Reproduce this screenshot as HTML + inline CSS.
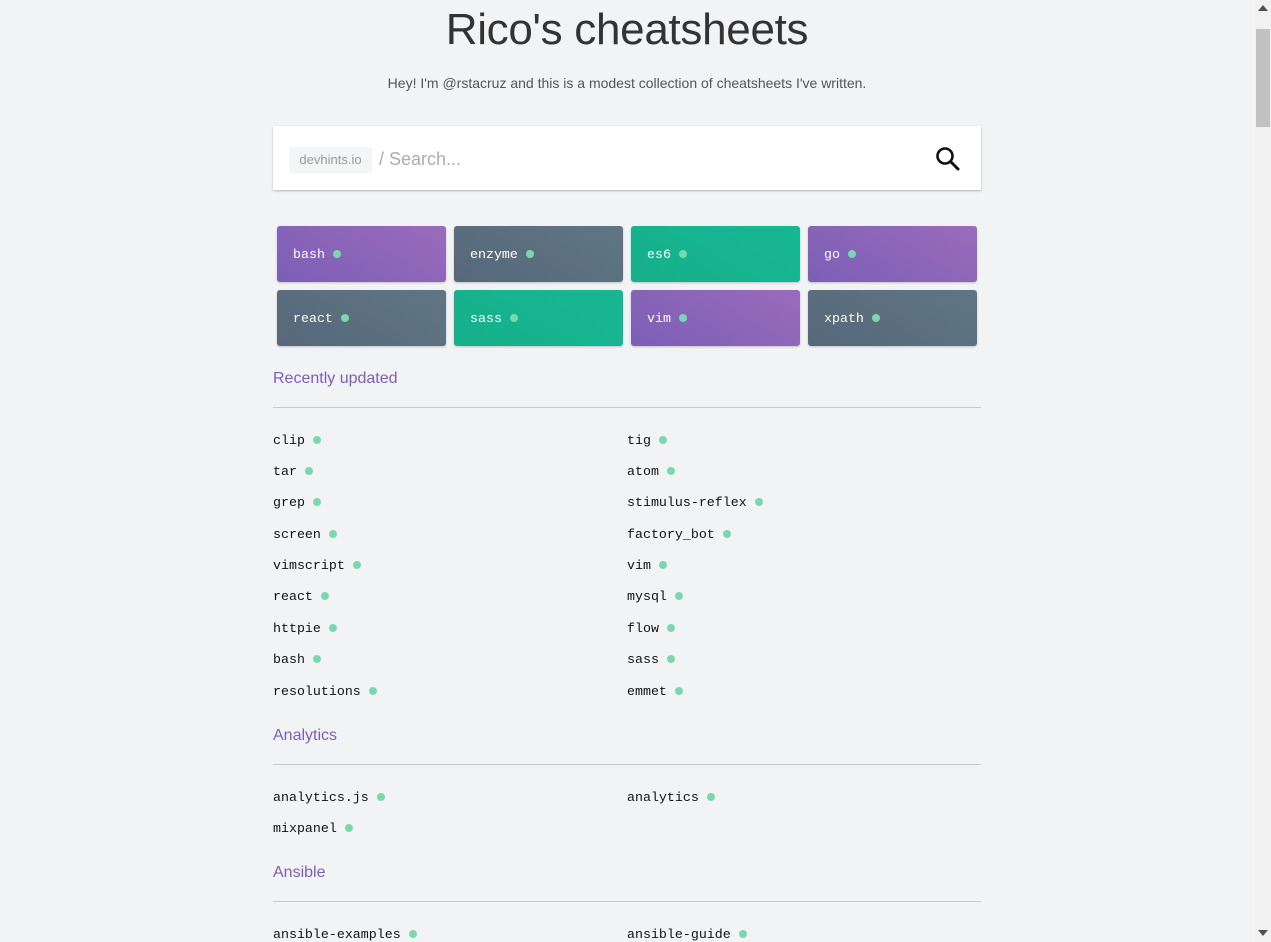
<!DOCTYPE html>
<html><head><style>
*{box-sizing:border-box;margin:0;padding:0}
body{width:1271px;height:942px;overflow:hidden;background:#f2f3f5;font-family:"Liberation Sans",sans-serif;position:relative}
.wrap{position:absolute;left:273px;width:708px;top:0}
h1{position:absolute;left:0;width:708px;top:5px;text-align:center;font-weight:300;font-size:44px;color:#333;letter-spacing:-0.3px}
.sub{position:absolute;top:75px;width:708px;text-align:center;font-size:14px;color:#555}
.search{position:absolute;top:126px;left:0;width:708px;height:64px;background:#fff;box-shadow:0 1px 2px rgba(0,0,0,.25)}
.tag{position:absolute;left:16px;top:21px;height:25px;width:83px;background:#f4f5f7;border-radius:3px;font-size:13px;color:#999;text-align:center;line-height:25px;box-shadow:0 1px 1px rgba(0,0,0,.06)}
.ph{position:absolute;left:106px;top:21px;font-size:18px;color:#aab;line-height:25px}
.icon{position:absolute;left:662px;top:20px}
.card{position:absolute;width:169px;height:56px;border-radius:3px;color:#fff;font-family:"Liberation Mono",monospace;font-size:13.3px;padding-left:16px;line-height:55px;padding-top:1px;box-shadow:0 1px 2px rgba(0,0,0,.2)}
.p{background:linear-gradient(30deg,#7b5fb6,#9b6bbb)}
.g{background:linear-gradient(30deg,#56687a,#607684)}
.t{background:linear-gradient(30deg,#16b08a,#17b794)}
.d{display:inline-block;width:8px;height:8px;border-radius:50%;background:#7bd8ad;margin-left:8px;vertical-align:0px}
.h2{position:absolute;left:0;font-size:16px;color:#7b5fb6}
.hr{position:absolute;left:0;width:708px;height:1px;background:#c8c9cb}
.li{position:absolute;font-family:"Liberation Mono",monospace;font-size:13.3px;color:#111;margin-top:2px}
.sb{position:absolute;left:1255px;top:0;width:16px;height:942px;background:#f1f1f1}
.th{position:absolute;left:1256px;top:29px;width:14px;height:98px;background:#c1c1c1}
</style></head><body>
<div class="wrap">
<h1>Rico's cheatsheets</h1>
<div class="sub">Hey! I'm @rstacruz and this is a modest collection of cheatsheets I've written.</div>
<div class="search"><div class="tag">devhints.io</div><div class="ph">/ Search...</div>
<svg class="icon" width="26" height="26" viewBox="0 0 26 26"><circle cx="10" cy="10" r="7.5" fill="none" stroke="#111" stroke-width="2.6"/><path d="M15.5 15.5L23 23" stroke="#111" stroke-width="3" stroke-linecap="round"/></svg></div>
</div>
<div class="card p" style="left:277px;top:226px">bash<span class="d"></span></div>
<div class="card g" style="left:454px;top:226px">enzyme<span class="d"></span></div>
<div class="card t" style="left:631px;top:226px">es6<span class="d"></span></div>
<div class="card p" style="left:808px;top:226px">go<span class="d"></span></div>
<div class="card g" style="left:277px;top:290px">react<span class="d"></span></div>
<div class="card t" style="left:454px;top:290px">sass<span class="d"></span></div>
<div class="card p" style="left:631px;top:290px">vim<span class="d"></span></div>
<div class="card g" style="left:808px;top:290px">xpath<span class="d"></span></div>
<div class="wrap">
<div class="h2" style="top:370px">Recently updated</div><div class="hr" style="top:407px"></div>
<div class="h2" style="top:727px">Analytics</div><div class="hr" style="top:764px"></div>
<div class="h2" style="top:864px">Ansible</div><div class="hr" style="top:901px"></div>
</div>
<div class="li" style="left:273px;top:431px">clip<span class="d"></span></div>
<div class="li" style="left:273px;top:462px">tar<span class="d"></span></div>
<div class="li" style="left:273px;top:493px">grep<span class="d"></span></div>
<div class="li" style="left:273px;top:525px">screen<span class="d"></span></div>
<div class="li" style="left:273px;top:556px">vimscript<span class="d"></span></div>
<div class="li" style="left:273px;top:587px">react<span class="d"></span></div>
<div class="li" style="left:273px;top:619px">httpie<span class="d"></span></div>
<div class="li" style="left:273px;top:650px">bash<span class="d"></span></div>
<div class="li" style="left:273px;top:682px">resolutions<span class="d"></span></div>
<div class="li" style="left:627px;top:431px">tig<span class="d"></span></div>
<div class="li" style="left:627px;top:462px">atom<span class="d"></span></div>
<div class="li" style="left:627px;top:493px">stimulus-reflex<span class="d"></span></div>
<div class="li" style="left:627px;top:525px">factory_bot<span class="d"></span></div>
<div class="li" style="left:627px;top:556px">vim<span class="d"></span></div>
<div class="li" style="left:627px;top:587px">mysql<span class="d"></span></div>
<div class="li" style="left:627px;top:619px">flow<span class="d"></span></div>
<div class="li" style="left:627px;top:650px">sass<span class="d"></span></div>
<div class="li" style="left:627px;top:682px">emmet<span class="d"></span></div>
<div class="li" style="left:273px;top:788px">analytics.js<span class="d"></span></div>
<div class="li" style="left:273px;top:819px">mixpanel<span class="d"></span></div>
<div class="li" style="left:627px;top:788px">analytics<span class="d"></span></div>
<div class="li" style="left:273px;top:925px">ansible-examples<span class="d"></span></div>
<div class="li" style="left:627px;top:925px">ansible-guide<span class="d"></span></div>
<div class="sb"></div><div class="th"></div>
<svg style="position:absolute;left:1258px;top:5px" width="10" height="6"><path d="M0 6L5 0L10 6Z" fill="#505050"/></svg>
<svg style="position:absolute;left:1258px;top:930px" width="10" height="6"><path d="M0 0L5 6L10 0Z" fill="#505050"/></svg>
</body></html>
